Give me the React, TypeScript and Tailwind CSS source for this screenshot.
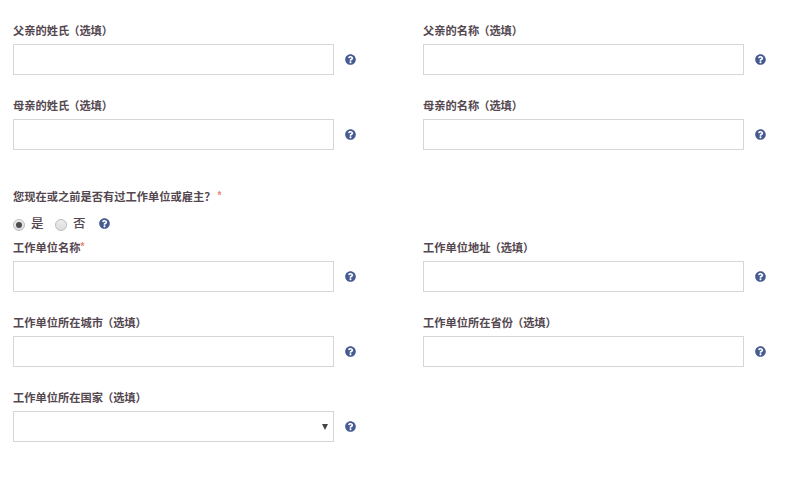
import { FaQuestionCircle } from 'react-icons/fa'

const Help = () => <FaQuestionCircle className="size-[11px] shrink-0 text-[#455b92]" />

const Required = () => <span className="pb-[2px] text-[10px] font-bold text-[#e88474]">*</span>

type FieldProps = {
  name: string
  optional?: boolean
  required?: boolean
  select?: boolean
}

const Field = ({ name, optional, required, select }: FieldProps) => (
  <div className="w-[345px]">
    <label className="flex h-[18px] items-center whitespace-nowrap font-bold">
      {name}
      {optional && <span className="-ml-px tracking-[-0.1px]">（选填）</span>}
      {required && <Required />}
    </label>
    <div className="mt-1 flex items-center gap-[11px]">
      {select ? (
        <div className="flex h-[31px] w-[321px] items-center justify-end border border-[#d6d6d6] pr-[5px]">
          <svg viewBox="0 0 6 6" className="h-[6px] w-[6px] fill-[#444444]">
            <path d="M0 0h6L3 6z" />
          </svg>
        </div>
      ) : (
        <input className="h-[31px] w-[321px] border border-[#d6d6d6] bg-white px-2 outline-none" />
      )}
      <Help />
    </div>
  </div>
)

const Radio = ({ checked }: { checked?: boolean }) => (
  <span className="mt-[3px] flex size-[12px] items-center justify-center rounded-full border border-[#bdbdbd] bg-linear-to-b from-[#ececec] to-[#dddddd]">
    {checked && <span className="size-[6px] rounded-full bg-[#4d4d4d]" />}
  </span>
)

const App = () => {
  return (
    <div className="h-[492px] w-[800px] bg-white pl-[13px] pt-[22px] font-['Liberation_Sans','Noto_Sans_CJK_SC',sans-serif] text-[11.25px] leading-[18px] text-[#54474f]">
      <div className="grid grid-cols-[410px_345px] gap-y-[22px]">
        <Field name="父亲的姓氏" optional />
        <Field name="父亲的名称" optional />
        <Field name="母亲的姓氏" optional />
        <Field name="母亲的名称" optional />
      </div>

      <div className="mt-[38px] flex h-[18px] items-center gap-[2px] font-bold">
        <span>您现在或之前是否有过工作单位或雇主？</span>
        <Required />
      </div>
      <div className="mt-[7px] flex h-[20px] items-center text-[12.5px] font-medium">
        <Radio checked />
        <span className="ml-[6px] w-[24px] pt-px">是</span>
        <Radio />
        <span className="ml-[6px] w-[26px] pt-px">否</span>
        <Help />
      </div>

      <div className="mt-[6px] grid grid-cols-[410px_345px] gap-y-[22px]">
        <Field name="工作单位名称" required />
        <Field name="工作单位地址" optional />
        <Field name="工作单位所在城市" optional />
        <Field name="工作单位所在省份" optional />
        <Field name="工作单位所在国家" optional select />
      </div>
    </div>
  )
}

export default App
